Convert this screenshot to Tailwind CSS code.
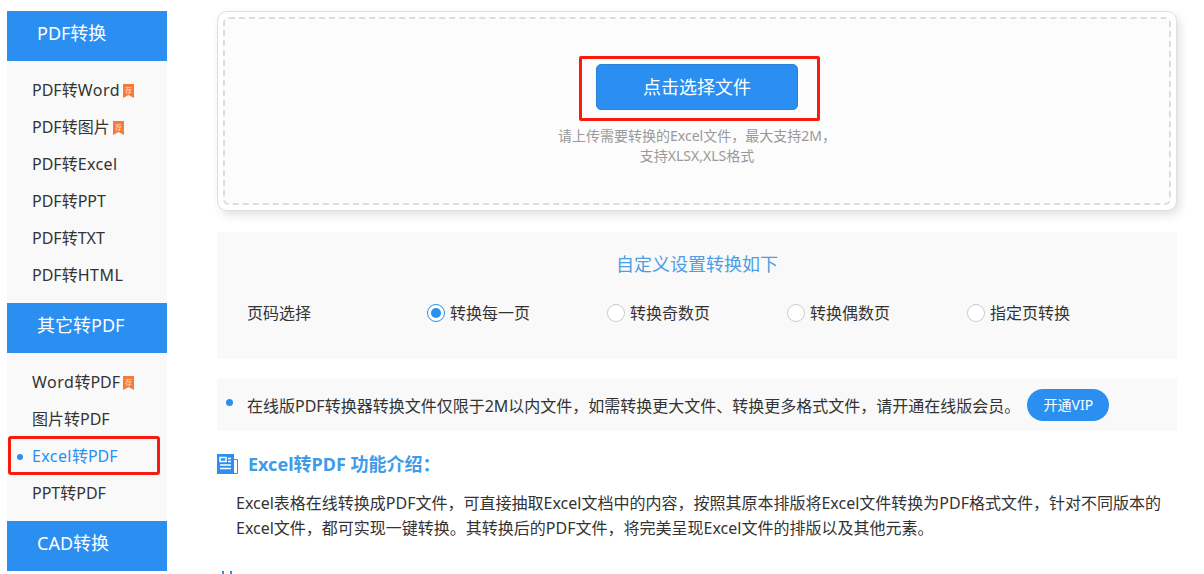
<!DOCTYPE html>
<html lang="zh-CN">
<head>
    <meta charset="UTF-8">
    <title>Excel转PDF</title>
    <script src="https://cdn.jsdelivr.net/npm/@tailwindcss/browser@4"></script>
</head>
<body class="bg-white h-[574px] overflow-hidden font-['Noto_Sans','Noto_Sans_CJK_SC',sans-serif] text-[#333]">
    <div class="flex pt-[11px] pl-[7px] gap-[50px]">
        <!-- sidebar -->
        <aside class="w-[160px] shrink-0">
            <div class="h-[50px] bg-[#2a8ff0] text-white text-[18px] leading-[44px] pl-[30px]">PDF转换</div>
            <ul class="bg-[#f9f9f9] pt-[11px] pb-[9px] pl-[25px] text-[16px] leading-[37px]">
                <li class="flex items-center gap-[3px]"><span>PDF转<span class="tracking-[0.5px]">Word</span></span>
                    <svg width="11" height="14" viewBox="0 0 11 14"><path d="M0 0h11v14L5.5 11 0 14z" fill="#f77a38"/><text x="5.5" y="8.5" font-size="7" fill="#ffd9c2" text-anchor="middle">荐</text></svg>
                </li>
                <li class="flex items-center gap-[3px]">PDF转图片
                    <svg width="11" height="14" viewBox="0 0 11 14"><path d="M0 0h11v14L5.5 11 0 14z" fill="#f77a38"/><text x="5.5" y="8.5" font-size="7" fill="#ffd9c2" text-anchor="middle">荐</text></svg>
                </li>
                <li>PDF转<span class="tracking-[0.4px]">Excel</span></li>
                <li>PDF转PPT</li>
                <li>PDF转TXT</li>
                <li>PDF转<span class="tracking-[0.5px]">HTML</span></li>
            </ul>
            <div class="h-[50px] bg-[#2a8ff0] text-white text-[18px] leading-[44px] pl-[30px]">其它转PDF</div>
            <ul class="bg-[#f9f9f9] pt-[11px] pb-[9px] pl-[25px] text-[16px] leading-[37px]">
                <li class="flex items-center gap-[3px]"><span><span class="tracking-[0.5px]">Word</span>转PDF</span>
                    <svg width="11" height="14" viewBox="0 0 11 14"><path d="M0 0h11v14L5.5 11 0 14z" fill="#f77a38"/><text x="5.5" y="8.5" font-size="7" fill="#ffd9c2" text-anchor="middle">荐</text></svg>
                </li>
                <li>图片转PDF</li>
                <li class="relative text-[#2a8ff0]">
                    <span class="tracking-[0.4px]">Excel</span>转PDF
                    <span class="absolute left-[-15px] top-[16px] w-[6px] h-[6px] rounded-full bg-[#2a8ff0]"></span>
                    <span class="absolute left-[-24px] top-[-2px] w-[152px] h-[39px] border-[3px] border-[#fb1a10] rounded-[3px]"></span>
                </li>
                <li>PPT转PDF</li>
            </ul>
            <div class="h-[50px] bg-[#2a8ff0] text-white text-[18px] leading-[44px] pl-[30px]">CAD转换</div>
        </aside>

        <!-- main -->
        <main class="w-[960px] shrink-0">
            <div class="h-[200px] p-[5px] bg-white border border-[#e0e0e0] rounded-[10px] shadow-[3px_4px_10px_rgba(0,0,0,0.12)]">
                <div class="h-full flex flex-col items-center pt-[45px] bg-[#fcfcfc] border-2 border-dashed border-[#ddd] rounded-[6px]">
                    <div class="relative">
                        <button class="block w-[202px] h-[46px] bg-[#2a8ff0] border border-[#2b83d6] rounded-[5px] text-white text-[18px]">点击选择文件</button>
                        <span class="absolute left-[-17px] top-[-8px] w-[241px] h-[65px] border-[3px] border-[#fb1a10] rounded-[2px]"></span>
                    </div>
                    <p class="mt-[16px] text-[14px] leading-[20px] text-[#999] text-center">请上传需要转换的Excel文件，最大支持2M，<br>支持XLSX,XLS格式</p>
                </div>
            </div>

            <section class="mt-[21px] h-[127px] bg-[#f9f9f9] pt-[18px] px-[30px]">
                <h2 class="text-[18px] leading-[28px] text-[#4a9fe6] text-center">自定义设置转换如下</h2>
                <div class="flex items-center mt-[21px] text-[16px] leading-[28px]">
                    <span class="w-[180px]">页码选择</span>
                    <label class="w-[180px] flex items-center gap-[5px]">
                        <span class="w-[18px] h-[18px] rounded-full bg-white border border-[#2a8ff0] flex items-center justify-center"><span class="w-[10px] h-[10px] rounded-full bg-[#2a8ff0]"></span></span>
                        转换每一页
                    </label>
                    <label class="w-[180px] flex items-center gap-[5px]">
                        <span class="w-[18px] h-[18px] rounded-full bg-white border border-[#ccc]"></span>
                        转换奇数页
                    </label>
                    <label class="w-[180px] flex items-center gap-[5px]">
                        <span class="w-[18px] h-[18px] rounded-full bg-white border border-[#ccc]"></span>
                        转换偶数页
                    </label>
                    <label class="flex items-center gap-[5px]">
                        <span class="w-[18px] h-[18px] rounded-full bg-white border border-[#ccc]"></span>
                        指定页转换
                    </label>
                </div>
            </section>

            <div class="relative mt-[20px] h-[52px] bg-[#f9f9f9] flex items-center pl-[30px] text-[16px]">
                <span class="absolute left-[9px] top-[20px] w-[7px] h-[7px] rounded-full bg-[#2a8ff0]"></span>
                <span class="pt-[1px]">在线版PDF转换器转换文件仅限于2M以内文件，如需转换更大文件、转换更多格式文件，请开通在线版会员。</span>
                <span class="ml-[7px] w-[82px] h-[32px] rounded-full bg-[#2a8ff0] text-white text-[14px] leading-[32px] text-center">开通VIP</span>
            </div>

            <h3 class="mt-[20px] flex items-center gap-[10px] h-[26px] text-[18px] font-bold text-[#3d9be9]">
                <svg width="21" height="20" viewBox="0 0 21 20">
                    <rect width="17" height="20" fill="#2a8ff0"/>
                    <path d="M17 5.5h3.5v14H17" fill="none" stroke="#2a8ff0"/>
                    <rect x="3" y="3.5" width="6" height="4" fill="none" stroke="#fff" stroke-width="1.5"/>
                    <path d="M11 4.5h3M11 7.5h3M3 11h11M3 14.5h11" stroke="#fff" stroke-width="1.5"/>
                </svg>
                Excel转PDF 功能介绍：
            </h3>
            <p class="mt-[14px] pl-[19px] text-[16px] leading-[25px]">Excel表格在线转换成PDF文件，可直接抽取Excel文档中的内容，按照其原本排版将Excel文件转换为PDF格式文件，针对不同版本的Excel文件，都可实现一键转换。其转换后的PDF文件，将完美呈现Excel文件的排版以及其他元素。</p>
            <div class="mt-[30px] ml-[5px] flex gap-[6px]">
                <span class="w-[2px] h-[3px] bg-[#2a8ff0]"></span>
                <span class="w-[2px] h-[3px] bg-[#2a8ff0]"></span>
            </div>
        </main>
    </div>
</body>
</html>
